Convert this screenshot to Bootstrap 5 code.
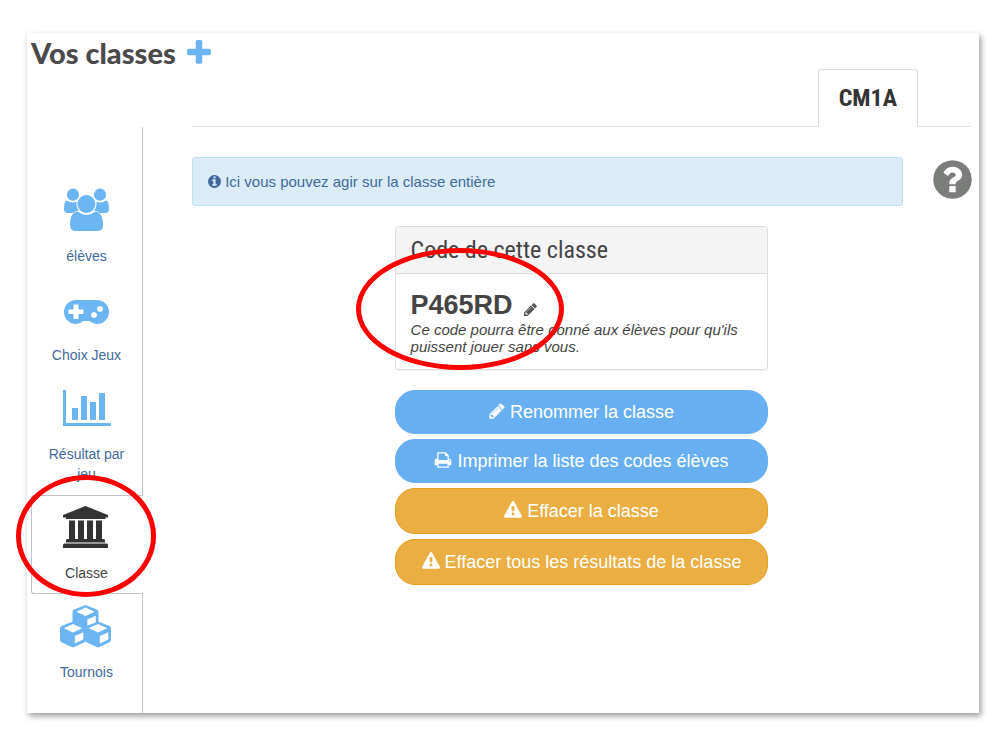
<!DOCTYPE html>
<html lang="fr">
<head>
<meta charset="utf-8">
<meta name="viewport" content="width=device-width, initial-scale=1">
<title>Vos classes</title>
<link href="https://cdn.jsdelivr.net/npm/bootstrap@5.3.0/dist/css/bootstrap.min.css" rel="stylesheet">
<style>
  body { font-family: "Liberation Sans", Arial, sans-serif; font-size: 15px; line-height: 20px; color: #444; background: #fff; }
  .panel { margin: 33px 28px 32px 27px; padding: 0 8px 0 4px; box-shadow: 2px 3px 6px rgba(0,0,0,.4); }
  .page-title { font: 900 29px/36px Lato, sans-serif; color: #4a4a4a; height: 36px; padding-top: 3px; gap: 10px; }
  .add-btn { color: #6bb5f2; line-height: 1; }
  .fa-svg { width: 1em; height: 1em; fill: currentColor; vertical-align: -2px; }
  .fa-slim { width: 13px; height: 15px; }
  .act .fa-slim { width: 16px; height: 18px; }
  .narrow { font-family: "Roboto Condensed", "Liberation Sans Narrow", sans-serif; font-size: 24px; }
  .class-tabs { margin-left: 161px; padding-right: 53px; }
  .class-tabs .nav-link, .class-tabs .nav-link.active { font-weight: 700; line-height: 26px; padding: 15px 20px; color: #333; border-radius: 3px 3px 0 0; border-color: #ddd #ddd #fff; }
  .side-nav { width: 112px; padding: 51px 0 20px; border-right: 1px solid #c4c4c4; }
  .side-nav .nav-link { font-size: 14px; line-height: 20px; padding: 9px 11px 10px 9px; border: 1px solid transparent; border-right: 0; border-radius: 3px 0 0 3px; color: #416a9b; text-align: center; margin-right: -1px; }
  .side-nav .nav-link.active { color: #444; background: #fff; border-color: #c4c4c4; }
  .side-nav svg { display: block; width: 56px; height: 45px; margin: 0 auto 13px; fill: #6bb5f2; }
  .side-nav .active svg { fill: #333; }
  .main-area { margin-left: 49px; padding-top: 30px; }
  .info-box { padding: 14px 15px 13px; margin: 0; color: #416a9b; background: #dbecf8; border: 1px solid #bce4f0; border-radius: 3px; }
  .help-btn { color: #7b7d7a; font-size: 45px; line-height: 1; margin: 0 -4px 0 27px; }
  .class-col { width: 48%; margin: 20px auto 0; }
  .code-card { border: 1px solid #ddd; border-radius: 4px; margin-bottom: 20px; box-shadow: 0 1px 1px rgba(0,0,0,.05); }
  .code-card .card-header { background: #f4f4f4; border-color: #ddd; padding: 10px 15px; line-height: 26px; }
  .code-card .card-body { padding: 16px 15px 14px; }
  .code-value { font-size: 27px; line-height: 31px; font-weight: 700; }
  .edit-btn { font-size: 15px; color: #555; line-height: 1; margin: 7px 0 0 10px; }
  .code-note { line-height: 17px; }
  .action-list { gap: 5px; }
  .act { font-size: 18px; line-height: 24px; padding: 9px 12px; border-radius: 20px; color: #fff; }
  .act-blue, .act-blue:hover { background: #68aff2; border-color: #68aff2; color: #fff; }
  .act-warn, .act-warn:hover { background: #eaae42; border-color: #e6a01f; color: #fff; padding: 10px 12px; }
  .ring { border: 5px solid #f00; border-radius: 50%; pointer-events: none; z-index: 5; }
  .ring-code { left: -40px; top: 21px; width: 208px; height: 122px; }
  .ring-side { left: -15px; top: -20px; width: 140px; height: 122px; }
</style>
</head>
<body>
<svg class="d-none" xmlns="http://www.w3.org/2000/svg">
  <symbol id="i-plus" viewBox="192 128 1408 1536"><path d="M1600 736v192q0 40-28 68t-68 28h-416v416q0 40-28 68t-68 28h-192q-40 0-68-28t-28-68v-416h-416q-40 0-68-28t-28-68v-192q0-40 28-68t68-28h416v-416q0-40 28-68t68-28h192q40 0 68 28t28 68v416h416q40 0 68 28t28 68z"/></symbol>
  <symbol id="i-info" viewBox="128 0 1536 1792"><path d="M1152 1376v-160q0-14-9-23t-23-9h-96v-512q0-14-9-23t-23-9h-320q-14 0-23 9t-9 23v160q0 14 9 23t23 9h96v320h-96q-14 0-23 9t-9 23v160q0 14 9 23t23 9h448q14 0 23-9t9-23zm-128-896v-160q0-14-9-23t-23-9h-192q-14 0-23 9t-9 23v160q0 14 9 23t23 9h192q14 0 23-9t9-23zm640 416q0 209-103 385.5t-279.5 279.5-385.5 103-385.5-103-279.5-279.5-103-385.5 103-385.5 279.5-279.5 385.5-103 385.5 103 279.5 279.5 103 385.5z"/></symbol>
  <symbol id="i-help" viewBox="0 0 1792 1792"><path d="M1024 1376v-192q0-14-9-23t-23-9h-192q-14 0-23 9t-9 23v192q0 14 9 23t23 9h192q14 0 23-9t9-23zm256-672q0-88-55.5-163t-138.5-116-170-41q-243 0-371 213-15 24 8 42l132 100q7 6 19 6 16 0 25-12 53-68 86-92 34-24 86-24 48 0 85.5 26t37.5 59q0 38-20 61t-68 45q-63 28-115.5 86.5t-52.5 125.5v36q0 14 9 23t23 9h192q14 0 23-9t9-23q0-19 21.5-49.5t54.5-49.5q32-18 49-28.5t46-35 44.5-48 28-60.5 12.5-81zm384 192q0 209-103 385.5t-279.5 279.5-385.5 103-385.5-103-279.5-279.5-103-385.5 103-385.5 279.5-279.5 385.5-103 385.5 103 279.5 279.5 103 385.5z"/></symbol>
  <symbol id="i-pencil" viewBox="128 0 1536 1792"><path d="M491 1536l91-91-235-235-91 91v107h128v128h107zm523-928q0-22-22-22-10 0-17 7l-542 542q-7 7-7 17 0 22 22 22 10 0 17-7l542-542q7-7 7-17zm-54-192l416 416-832 832h-416v-416zm683 96q0 53-37 90l-166 166-416-416 166-165q36-38 90-38 53 0 91 38l235 234q37 39 37 91z"/></symbol>
  <symbol id="i-print" viewBox="0 0 1792 1792"><path d="M448 1536h896v-256h-896v256zm0-640h896v-384h-160q-40 0-68-28t-28-68v-160h-640v640zm1152 64q0-26-19-45t-45-19-45 19-19 45 19 45 45 19 45-19 19-45zm128 0v416q0 13-9.500 22.500t-22.500 9.500h-224v160q0 40-28 68t-68 28h-960q-40 0-68-28t-28-68v-160h-224q-13 0-22.500-9.500t-9.500-22.500v-416q0-79 56.500-135.500t135.500-56.500h64v-544q0-40 28-68t68-28h672q40 0 88 20t76 48l152 152q28 28 48 76t20 88v256h64q79 0 135.500 56.500t56.500 135.500z"/></symbol>
  <symbol id="i-warn" viewBox="0 0 1792 1792"><path d="M1024 1375v-190q0-14-9.500-23.500t-22.500-9.500h-192q-13 0-22.500 9.500t-9.500 23.500v190q0 14 9.500 23.500t22.500 9.500h192q13 0 22.500-9.500t9.500-23.500zm-2-374l18-459q0-12-10-19-13-11-24-11h-220q-11 0-24 11-10 7-10 21l17 457q0 10 10 16.500t24 6.500h185q14 0 23.500-6.500t10.500-16.500zm-14-934l768 1408q35 63-2 126-17 29-46.500 46t-63.500 17h-1536q-34 0-63.500-17t-46.500-46q-37-63-2-126l768-1408q17-31 47-49t65-18 65 18 47 49z"/></symbol>
</svg>

<div class="panel">
  <h1 class="page-title d-flex align-items-center mb-0">Vos classes
    <button type="button" class="add-btn btn btn-link p-0 border-0" aria-label="Ajouter une classe"><svg class="d-block" width="26" height="26" fill="currentColor"><use href="#i-plus"/></svg></button>
  </h1>
  <ul class="class-tabs nav nav-tabs justify-content-end narrow">
    <li class="nav-item"><a class="nav-link active" href="#cm1a">CM1A</a></li>
  </ul>

  <div class="d-flex">
    <nav class="side-nav nav flex-column flex-nowrap flex-shrink-0">
      <a class="nav-link" href="#eleves">
        <svg viewBox="0 0 56 45"><circle cx="14" cy="6.700" r="6.100"/><circle cx="41" cy="6.700" r="6.100"/><path d="M7.500 12.500Q14 16 17.500 13.200Q17 20 20 22.500Q16 22.500 14 25H9Q5 25 5 21Q5 13 7.500 12.500ZM47.500 12.500Q41 16 37.500 13.200Q38 20 34.800 22.500Q39 22.500 41 25H46Q50 25 50 21Q50 13 47.500 12.500Z"/><circle cx="27.400" cy="16" r="9"/><path d="M18.500 23.500Q27.500 30.500 36.500 23.500C42 24 44 30 44 37Q44 43 38 43H17Q11 43 11 37C11 30 13 24 18.500 23.500Z"/></svg>élèves</a>
      <a class="nav-link" href="#jeux">
        <svg viewBox="0 0 56 45"><path fill-rule="evenodd" d="M17 13H38A12 12 0 0 1 38 37Q34 37 30.500 34H24.500Q21 37 17 37A12 12 0 0 1 17 13ZM14.500 17.500V22.500H9.500V27H14.500V32H19.500V27H24.500V22.500H19.500V17.500ZM35 25a3 3 0 1 0 .01 0ZM41 19a3 3 0 1 0 .01 0Z"/></svg>Choix Jeux</a>
      <a class="nav-link" href="#resultats">
        <svg viewBox="0 0 56 45"><path d="M4 4H7V37H52V40H4ZM13 22H19V34H13ZM22 10H28V34H22ZM31 16H37V34H31ZM40 7H46V34H40Z"/></svg>Résultat par jeu</a>
      <div class="position-relative">
        <a class="nav-link active" href="#classe" aria-current="page">
          <svg viewBox="0 0 56 45"><path d="M26.500 1L49 10V12.500H46.500V14H7V12.500H4V10ZM10 15.500H16V34H19V15.500H25V34H28V15.500H34V34H37V15.500H43V34H45Q46 34 46 36V37.500H7V36Q7 34 8 34H10ZM5.500 38.500H47.500Q49 38.500 49 40V43H4V40Q4 38.500 5.500 38.500Z"/></svg>Classe</a>
        <span class="ring ring-side position-absolute"></span>
      </div>
      <a class="nav-link" href="#tournois">
        <svg viewBox="0 0 56 45"><defs><g id="cube"><path d="M13 0L24.500 4.500Q26 5.200 26 7V18Q26 20 24.500 20.700L14.500 25.400Q13 26 11.500 25.400L1.500 20.700Q0 20 0 18V7Q0 5.200 1.500 4.500Z"/><path fill="#fff" d="M13 2.500L22.200 6.800L13 11L3.800 6.800ZM14.800 14.500L23.300 10.800V18L14.800 22Z"/></g></defs><use href="#cube" x="13.500" y="1"/><use href="#cube" x="1" y="17.500"/><use href="#cube" x="26" y="17.500"/></svg>Tournois</a>
    </nav>

    <main class="main-area flex-grow-1">
      <div class="d-flex align-items-start">
        <div class="info-box alert flex-grow-1"><svg class="fa-svg fa-slim"><use href="#i-info"/></svg> Ici vous pouvez agir sur la classe entière</div>
        <button type="button" class="help-btn btn btn-link p-0 border-0" aria-label="Aide"><svg class="fa-svg d-block"><use href="#i-help"/></svg></button>
      </div>
      <div class="class-col">
        <section class="code-card card">
          <h2 class="card-header narrow fw-normal mb-0">Code de cette classe</h2>
          <div class="card-body">
            <div class="d-flex align-items-center">
              <span class="code-value">P465RD</span>
              <button type="button" class="edit-btn btn btn-link p-0 border-0" aria-label="Modifier le code"><svg class="fa-svg d-block"><use href="#i-pencil"/></svg></button>
            </div>
            <p class="code-note fst-italic mb-0">Ce code pourra être donné aux élèves pour qu'ils puissent jouer sans vous.</p>
          </div>
          <span class="ring ring-code position-absolute"></span>
        </section>
        <div class="d-grid action-list">
          <button type="button" class="act act-blue btn"><svg class="fa-svg fa-slim"><use href="#i-pencil"/></svg> Renommer la classe</button>
          <button type="button" class="act act-blue btn"><svg class="fa-svg"><use href="#i-print"/></svg> Imprimer la liste des codes élèves</button>
          <button type="button" class="act act-warn btn"><svg class="fa-svg"><use href="#i-warn"/></svg> Effacer la classe</button>
          <button type="button" class="act act-warn btn"><svg class="fa-svg"><use href="#i-warn"/></svg> Effacer tous les résultats de la classe</button>
        </div>
      </div>
    </main>
  </div>
</div>
<script src="https://cdn.jsdelivr.net/npm/bootstrap@5.3.0/dist/js/bootstrap.bundle.min.js"></script>
</body>
</html>
